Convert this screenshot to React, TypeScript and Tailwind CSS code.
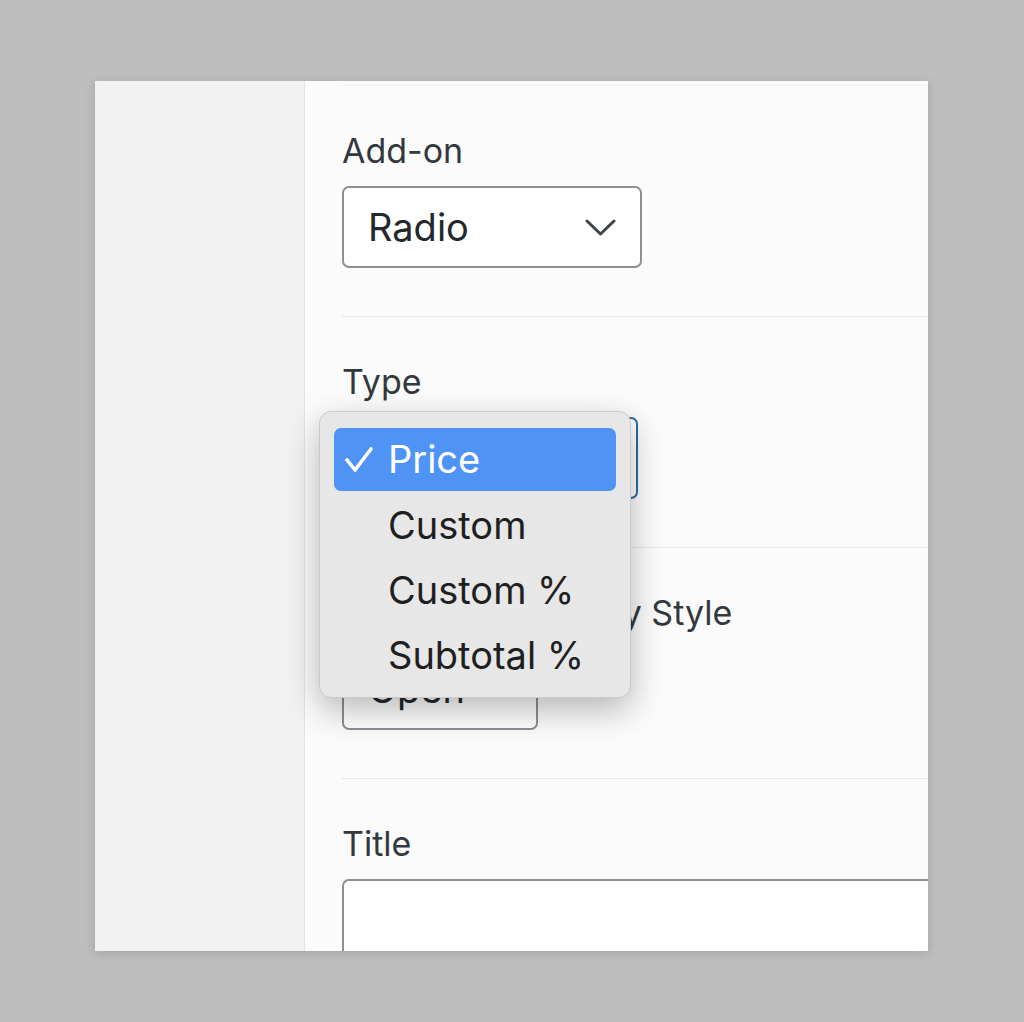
import React from "react";

const font = { fontFamily: "Inter, 'Noto Sans', sans-serif" };

const Chevron: React.FC = () => (
    <svg width="31" height="17" viewBox="0 0 31 17" fill="none" className="shrink-0">
        <path d="M2 2 L15.5 15 L29 2" stroke="#3c434a" strokeWidth="3" strokeLinecap="round" strokeLinejoin="round" />
    </svg>
);

const Check: React.FC = () => (
    <svg width="28" height="26" viewBox="0 0 28 26" fill="none" className="shrink-0">
        <path d="M2 13 L10 23 L26 2" stroke="#ffffff" strokeWidth="3.6" strokeLinecap="round" strokeLinejoin="round" />
    </svg>
);

const Section: React.FC<{ label: string; children: React.ReactNode }> = ({ label, children }) => (
    <div className="pt-[45px] pb-[48px] border-b border-[#e6e6e6]">
        <div className="text-[34px] leading-[40px] text-[#32383e] whitespace-nowrap">{label}</div>
        <div className="mt-[15px]">{children}</div>
    </div>
);

const SelectBox: React.FC<{ value: string; width: string; focused?: boolean }> = ({ value, width, focused }) => (
    <div
        className={`${width} h-[82px] bg-white rounded-[7px] border-2 flex items-center justify-between pl-[24px] pr-[24px] ${focused ? "border-[#2a6aa6]" : "border-[#8c8f94]"}`}
    >
        <span className="text-[38px] text-[#23282d]">{value}</span>
        <Chevron />
    </div>
);

const options = ["Price", "Custom", "Custom %", "Subtotal %"];

const App: React.FC = () => {
    return (
        <div className="w-[1024px] h-[1022px] bg-[#bebebe] pl-[95px] pt-[81px] overflow-hidden" style={font}>
            <div className="relative w-[833px] h-[870px] flex shadow-[0_2px_10px_rgba(0,0,0,0.15)] overflow-hidden">
                {/* sidebar */}
                <div className="w-[210px] shrink-0 bg-[#f2f2f2] border-r border-[#e4e4e4]" />

                {/* main */}
                <div className="flex-1 bg-[#fbfbfb] pl-[37px] overflow-hidden">
                    <div className="mt-[4px] border-b border-[#eeeeee]" />
                    <Section label="Add-on">
                        <SelectBox value="Radio" width="w-[300px]" />
                    </Section>
                    <Section label="Type">
                        <SelectBox value="Price" width="w-[296px]" focused />
                    </Section>
                    <Section label="Option List Display Style">
                        <SelectBox value="Open" width="w-[196px]" />
                    </Section>
                    <div className="pt-[45px]">
                        <div className="text-[34px] leading-[40px] text-[#32383e]">Title</div>
                        <div className="mt-[15px] w-[700px] h-[90px] bg-white rounded-[7px] border-2 border-[#8c8f94]" />
                    </div>
                </div>

                {/* open dropdown menu */}
                <div className="absolute left-[224px] top-[330px] w-[312px] h-[287px] rounded-[12px] bg-[#e7e7e7] border border-[#c9c9c9] shadow-[0_12px_34px_rgba(0,0,0,0.28)] pt-[16px] px-[14px]">
                    {options.map((opt, i) =>
                        i === 0 ? (
                            <div key={opt} className="h-[63px] mb-[2px] rounded-[7px] bg-[#4f94f4] flex items-center pl-[11px]">
                                <Check />
                                <span className="ml-[15px] text-[38px] text-white">{opt}</span>
                            </div>
                        ) : (
                            <div key={opt} className="h-[65px] flex items-center pl-[54px]">
                                <span className="text-[38px] text-[#1f1f1f]">{opt}</span>
                            </div>
                        )
                    )}
                </div>
            </div>
        </div>
    );
};

export default App;
